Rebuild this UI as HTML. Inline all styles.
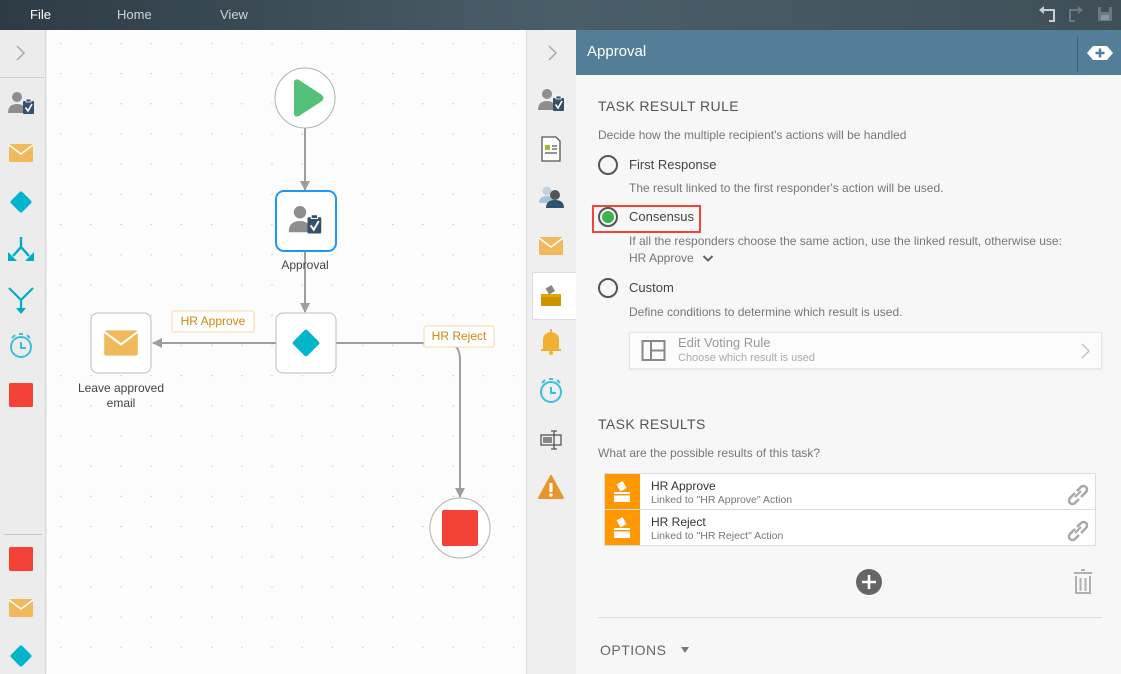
<!DOCTYPE html>
<html><head><meta charset="utf-8">
<style>
*{margin:0;padding:0;box-sizing:border-box}
body{width:1121px;height:674px;overflow:hidden;font-family:"Liberation Sans",sans-serif;background:#fafafa;position:relative}
.a{position:absolute}
.t{position:absolute;white-space:nowrap}
</style></head><body>
<svg width="0" height="0" style="position:absolute">
<defs>
<g id="usr">
 <circle cx="-4" cy="-7" r="5" fill="#8e8e8e"/>
 <path d="M-13 9 Q-13 0 -4 0 Q1 0 3 3 L3 9 Z" fill="#8e8e8e"/>
 <rect x="2" y="-3" width="11" height="13" rx="1" fill="#34506a"/>
 <rect x="5" y="-5" width="5" height="3" fill="#34506a" stroke="#fff" stroke-width=".8"/>
 <path d="M4.5 3.5 L7 7 L11 0" stroke="#fff" stroke-width="1.6" fill="none"/>
</g>
<g id="mail">
 <rect x="-12" y="-9" width="24" height="18" rx="1.5" fill="#f0b95c"/>
 <path d="M-12 -8 L0 1 L12 -8" stroke="#fff" stroke-width="1.5" fill="none"/>
</g>
<g id="dia"><rect x="-8" y="-8" width="16" height="16" rx="2" fill="#00b5cc" transform="rotate(45)"/></g>
<g id="stop"><rect x="-12" y="-12" width="24" height="24" rx="1.5" fill="#f44336"/></g>
<g id="timer" fill="none" stroke="#3cc0d8" stroke-width="2">
 <circle cx="0" cy="1" r="10"/><path d="M0 -4 V2 H5"/><path d="M-9 -8 L-6 -11 M9 -8 L6 -11 M-2 -12 H2"/>
</g>
<g id="ballot">
 <rect x="-8" y="1" width="16" height="10" fill="#fff"/>
 <rect x="-8" y="3" width="16" height="1.5" fill="#ff9800"/>
 <rect x="-4" y="-9" width="7" height="8" fill="#fff" transform="rotate(-30 0 -5)"/>
</g>
<pattern id="dots" x="60" y="73" width="30.2" height="30.2" patternUnits="userSpaceOnUse">
 <rect x="0" y="0" width="1.2" height="1.2" fill="#c4c4c4"/>
</pattern>
<marker id="arr" markerWidth="10" markerHeight="10" refX="9" refY="5" orient="auto" markerUnits="userSpaceOnUse"><path d="M0 0 L10 5 L0 10 Z" fill="#9e9e9e"/></marker>
</defs>
</svg>

<!-- top bar -->
<div class="a" style="left:0;top:0;width:1121px;height:30px;background:linear-gradient(90deg,#2d3b44,#4a5e69 50%,#3f4f58)"></div>
<div class="t" style="left:30px;top:7px;font-size:13px;color:#fff">File</div>
<div class="t" style="left:117px;top:7px;font-size:13px;color:#cfd6da">Home</div>
<div class="t" style="left:220px;top:7px;font-size:13px;color:#cfd6da">View</div>
<svg class="a" style="left:1036px;top:4px" width="80" height="20">
 <path d="M6 6 H18 V17 H13" stroke="#c8ced2" stroke-width="2" fill="none"/><path d="M3 6 L8 2 V10 Z" fill="#c8ced2"/>
 <path d="M44 6 H34 V17 H39" stroke="#6b7a82" stroke-width="2" fill="none"/><path d="M47 6 L42 2 V10 Z" fill="#6b7a82"/>
 <rect x="62" y="3" width="14" height="14" rx="1" fill="#6b7a82"/><rect x="65" y="3" width="8" height="5" fill="#3f4f58"/><rect x="65" y="11" width="8" height="5" fill="#8a979e"/>
</svg>

<!-- left palette -->
<div class="a" style="left:0;top:30px;width:46px;height:644px;background:#ececec;border-right:1px solid #d8d8d8;box-shadow:1px 0 2px rgba(0,0,0,.08)"></div>
<div class="a" style="left:0;top:77px;width:44px;height:1px;background:#d0d0d0"></div>
<div class="a" style="left:4px;top:534px;width:38px;height:1px;background:#c8c8c8"></div>
<svg class="a" style="left:0;top:30px" width="46" height="644">
 <path d="M17 16 L24 23 L17 30" stroke="#a8a8a8" stroke-width="1.5" fill="none"/>
 <use href="#usr" x="21" y="74"/>
 <use href="#mail" x="21" y="123"/>
 <use href="#dia" x="21" y="172"/>
 <g stroke="#00acc8" stroke-width="2.4" fill="none"><path d="M21 207 V217 L13 226 M21 217 L29 226"/></g>
 <path d="M8 222 V231 H17 Z" fill="#00acc8"/><path d="M34 222 V231 H25 Z" fill="#00acc8"/>
 <g stroke="#00acc8" stroke-width="2.2" fill="none"><path d="M9 258 L21 270 L33 258 M21 270 V280"/></g><path d="M16 278 H26 L21 284 Z" fill="#00acc8"/>
 <use href="#timer" x="21" y="316"/>
 <use href="#stop" x="21" y="365"/>
 <use href="#stop" x="21" y="529"/>
 <use href="#mail" x="21" y="578"/>
 <use href="#dia" x="21" y="626"/>
</svg>

<!-- canvas -->
<svg class="a" style="left:47px;top:30px" width="479" height="644" viewBox="47 30 479 644">
 <rect x="47" y="30" width="479" height="644" fill="#fcfcfc"/>
 <rect x="47" y="30" width="479" height="644" fill="url(#dots)"/>
 <g stroke="#9e9e9e" stroke-width="2" fill="none">
  <path d="M305 128 V190" marker-end="url(#arr)"/>
  <path d="M305 251 V312" marker-end="url(#arr)"/>
  <path d="M276 343 H153" marker-end="url(#arr)"/>
  <path d="M336 343 H446 Q460 343 460 360 V497" marker-end="url(#arr)"/>
 </g>
 <circle cx="305" cy="98" r="30" fill="#fff" stroke="#b0b0b0"/>
 <path d="M294 83 L294 113 Q294 118 299 116 L322 101 Q325 98 322 95 L299 80 Q294 78 294 83 Z" fill="#52c27a"/>
 <rect x="276" y="191" width="60" height="60" rx="8" fill="#fff" stroke="#2196f3" stroke-width="2"/>
 <use href="#usr" x="0" y="0" transform="translate(305 221) scale(1.25)"/>
 <rect x="276" y="313" width="60" height="60" rx="7" fill="#fff" stroke="#bdbdbd"/>
 <rect x="296" y="333" width="20" height="20" rx="2" fill="#00b5cc" transform="rotate(45 306 343)"/>
 <rect x="91" y="313" width="60" height="60" rx="7" fill="#fff" stroke="#bdbdbd"/>
 <use href="#mail" transform="translate(121 343) scale(1.4)"/>
 <circle cx="460" cy="528" r="30" fill="#fff" stroke="#b0b0b0"/>
 <rect x="442" y="510" width="36" height="36" rx="2" fill="#f44336"/>
 <rect x="172" y="311" width="82" height="21" rx="2" fill="#fff" stroke="#f7d9a8"/>
 <rect x="424" y="326" width="70" height="21" rx="2" fill="#fff" stroke="#f7d9a8"/>
</svg>
<div class="t" style="left:277px;top:258px;font-size:12px;color:#444;width:56px;text-align:center">Approval</div>
<div class="t" style="left:60px;top:381px;font-size:12px;color:#444;width:122px;text-align:center;line-height:15px">Leave approved<br>email</div>
<div class="t" style="left:172px;top:314px;font-size:12px;color:#d4860a;width:82px;text-align:center">HR Approve</div>
<div class="t" style="left:424px;top:329px;font-size:12px;color:#d4860a;width:70px;text-align:center">HR Reject</div>

<!-- right icon strip -->
<div class="a" style="left:526px;top:30px;width:50px;height:644px;background:#efefef;border-left:1px solid #ddd"></div>
<div class="a" style="left:532px;top:272px;width:45px;height:48px;background:#fff;border:1px solid #ddd;border-right:none;border-radius:2px 0 0 2px"></div>
<svg class="a" style="left:526px;top:30px" width="50" height="644">
 <path d="M23 16 L30 23 L23 30" stroke="#a8a8a8" stroke-width="1.5" fill="none"/>
 <use href="#usr" x="25" y="71"/>
 <g transform="translate(25 119)"><path d="M-9 -12 H5 L9 -8 V12 H-9 Z" fill="#fff" stroke="#555" stroke-width="1.3"/><rect x="-6" y="-4" width="5" height="5" fill="#a5b82a"/><path d="M1 -3 H6 M1 0 H6 M-6 4 H6" stroke="#555" stroke-width="1.3"/></g>
 <g transform="translate(25 167)"><circle cx="-4" cy="-6" r="4.5" fill="#c5d0d8"/><path d="M-12 6 Q-12 -1 -4 -1 Q4 -1 4 6Z" fill="#a9c4d6"/><circle cx="4" cy="-2" r="5" fill="#555"/><path d="M-5 11 Q-5 3 4 3 Q13 3 13 11Z" fill="#2f5470"/></g>
 <use href="#mail" x="25" y="216"/>
 <g transform="translate(25 266)"><rect x="-10" y="0" width="20" height="10" fill="#cc9400"/><rect x="-10" y="-2" width="20" height="3" fill="#e0a800"/><rect x="-4" y="-10" width="7" height="7" fill="#888" transform="rotate(-30 0 -6)"/></g>
 <g transform="translate(25 312)" fill="#f0b030"><path d="M-8 7 V-2 Q-8 -9 0 -10 Q8 -9 8 -2 V7 H10 V9 H-10 V7 Z"/><circle cx="0" cy="11" r="2"/><rect x="-1" y="-13" width="2" height="3"/></g>
 <use href="#timer" x="25" y="361"/>
 <g transform="translate(25 410)" stroke="#555" stroke-width="1.3" fill="none"><rect x="-10" y="-5" width="20" height="10"/><rect x="-8" y="-3" width="9" height="6" fill="#888" stroke="none"/><path d="M3 -9 V9 M0 -9 H6 M0 9 H6"/></g>
 <g transform="translate(25 458)"><path d="M0 -12 L12 10 H-12 Z" fill="#e8962b" stroke="#e8962b" stroke-width="2" stroke-linejoin="round"/><rect x="-1.5" y="-5" width="3" height="9" fill="#fff"/><circle cx="0" cy="7" r="1.7" fill="#fff"/></g>
</svg>

<!-- panel -->
<div class="a" style="left:576px;top:30px;width:545px;height:644px;background:#f7f7f7"></div>
<div class="a" style="left:576px;top:30px;width:545px;height:45px;background:#527e98"></div>
<div class="a" style="left:1077px;top:36px;width:1px;height:36px;background:#3d6075"></div>
<div class="t" style="left:587px;top:43px;font-size:15px;color:#fff">Approval</div>
<svg class="a" style="left:1087px;top:45px" width="28" height="16"><path d="M6 1 H20 L26 8 L20 15 H6 L0 8 Z" fill="#fff"/><path d="M13 3.5 V12.5 M8.5 8 H17.5" stroke="#527e98" stroke-width="2.4"/></svg>

<div class="t" style="left:598px;top:98px;font-size:14px;color:#555;letter-spacing:.4px">TASK RESULT RULE</div>
<div class="t" style="left:598px;top:128px;font-size:12px;color:#777">Decide how the multiple recipient's actions will be handled</div>

<div class="a" style="left:598px;top:155px;width:20px;height:20px;border:2px solid #555;border-radius:50%"></div>
<div class="t" style="left:629px;top:157px;font-size:13px;color:#444">First Response</div>
<div class="t" style="left:629px;top:181px;font-size:12px;color:#777">The result linked to the first responder's action will be used.</div>

<div class="a" style="left:592px;top:205px;width:109px;height:28px;border:2px solid #f44336"></div>
<div class="a" style="left:598px;top:207px;width:20px;height:20px;border:2px solid #555;border-radius:50%"></div>
<div class="a" style="left:602px;top:211px;width:12px;height:12px;background:#3cb44a;border-radius:50%"></div>
<div class="t" style="left:629px;top:209px;font-size:13px;color:#444">Consensus</div>
<div class="t" style="left:629px;top:234px;font-size:12px;color:#777">If all the responders choose the same action, use the linked result, otherwise use:</div>
<div class="t" style="left:629px;top:251px;font-size:12px;color:#777">HR Approve</div>
<svg class="a" style="left:702px;top:254px" width="12" height="10"><path d="M1.5 2 L6 6.5 L10.5 2" stroke="#666" stroke-width="2" fill="none"/></svg>

<div class="a" style="left:598px;top:278px;width:20px;height:20px;border:2px solid #555;border-radius:50%"></div>
<div class="t" style="left:629px;top:280px;font-size:13px;color:#444">Custom</div>
<div class="t" style="left:629px;top:305px;font-size:12px;color:#777">Define conditions to determine which result is used.</div>

<div class="a" style="left:629px;top:332px;width:473px;height:37px;background:#fcfcfc;border:1px solid #e6e6e6;box-shadow:0 1px 2px rgba(0,0,0,.06)"></div>
<svg class="a" style="left:641px;top:339px" width="26" height="24"><rect x="1.5" y="2" width="22" height="19" fill="none" stroke="#888" stroke-width="2"/><path d="M10 2 V21 M10 11.5 H23.5" stroke="#888" stroke-width="2"/></svg>
<div class="t" style="left:678px;top:335px;font-size:13px;color:#999">Edit Voting Rule</div>
<div class="t" style="left:678px;top:352px;font-size:11px;color:#aaa">Choose which result is used</div>
<svg class="a" style="left:1080px;top:342px" width="12" height="18"><path d="M2 2 L9 9 L2 16" stroke="#c4c4c4" stroke-width="1.5" fill="none"/></svg>

<div class="t" style="left:598px;top:416px;font-size:14px;color:#555;letter-spacing:.4px">TASK RESULTS</div>
<div class="t" style="left:598px;top:446px;font-size:12px;color:#777">What are the possible results of this task?</div>

<div class="a" style="left:604px;top:473px;width:492px;height:37px;background:#fff;border:1px solid #ddd"></div>
<div class="a" style="left:604px;top:509px;width:492px;height:37px;background:#fff;border:1px solid #ddd"></div>
<div class="a" style="left:605px;top:474px;width:35px;height:35px;background:#ff9800"></div>
<div class="a" style="left:605px;top:510px;width:35px;height:35px;background:#ff9800"></div>
<svg class="a" style="left:605px;top:474px" width="35" height="72"><use href="#ballot" x="17" y="17"/><use href="#ballot" x="17" y="53"/></svg>
<div class="t" style="left:651px;top:479px;font-size:12px;color:#333">HR Approve</div>
<div class="t" style="left:651px;top:494px;font-size:10.5px;color:#777">Linked to "HR Approve" Action</div>
<div class="t" style="left:651px;top:515px;font-size:12px;color:#333">HR Reject</div>
<div class="t" style="left:651px;top:530px;font-size:10.5px;color:#777">Linked to "HR Reject" Action</div>
<svg class="a" style="left:1064px;top:480px" width="28" height="64" fill="none" stroke="#a8a8a8" stroke-width="2.5">
 <g><path d="M11 13 L6 18 A3.5 3.5 0 0 0 11 23 L15 19"/><path d="M13 11 L17 7 A3.5 3.5 0 0 1 22 12 L17 17"/><path d="M11 17 L17 11" stroke-width="2"/></g>
 <g transform="translate(0 36)"><path d="M11 13 L6 18 A3.5 3.5 0 0 0 11 23 L15 19"/><path d="M13 11 L17 7 A3.5 3.5 0 0 1 22 12 L17 17"/><path d="M11 17 L17 11" stroke-width="2"/></g>
</svg>

<svg class="a" style="left:855px;top:568px" width="28" height="28"><circle cx="14" cy="14" r="13" fill="#666"/><path d="M14 7 V21 M7 14 H21" stroke="#fff" stroke-width="2.6"/></svg>
<svg class="a" style="left:1072px;top:568px" width="22" height="28" fill="none" stroke="#b0b0b0" stroke-width="2"><path d="M2 5 H20 M9 2 H13"/><path d="M4 8 V25 H18 V8"/><path d="M8.5 10 V23 M13.5 10 V23"/></svg>

<div class="a" style="left:598px;top:617px;width:504px;height:1px;background:#ddd"></div>
<div class="t" style="left:600px;top:642px;font-size:14px;color:#666;letter-spacing:.5px">OPTIONS</div>
<svg class="a" style="left:680px;top:645px" width="10" height="10"><path d="M1 2 H9 L5 8 Z" fill="#777"/></svg>
</body></html>
